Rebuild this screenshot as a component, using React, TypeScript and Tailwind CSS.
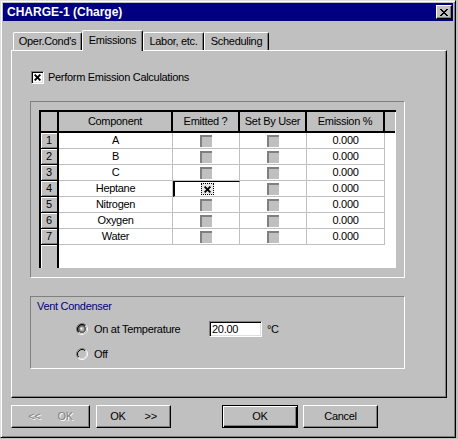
import React from "react";

const components = ["A", "B", "C", "Heptane", "Nitrogen", "Oxygen", "Water"];

const closeGlyph = ["xx....xx", ".xx..xx.", "..xxxx..", "...xx...", "..xxxx..", ".xx..xx.", "xx....xx"];

function CloseGlyph() {
  return (
    <svg width="8" height="7" viewBox="0 0 8 7" shapeRendering="crispEdges">
      {closeGlyph.map((row, y) =>
        row.split("").map((c, x) => (c === "x" ? <rect key={`${x}-${y}`} x={x} y={y} width="1" height="1" fill="#000" /> : null))
      )}
    </svg>
  );
}

function XMark() {
  return (
    <svg width="7" height="7" viewBox="0 0 7 7">
      <path d="M0.6 0.6 L6.4 6.4 M6.4 0.6 L0.6 6.4" stroke="#000" strokeWidth="1.9" fill="none" />
    </svg>
  );
}

function Radio({ checked }: { checked?: boolean }) {
  return (
    <svg width="12" height="12" viewBox="0 0 12 12">
      <circle cx="6" cy="6" r="5.5" fill={checked ? "#606060" : "#c0c0c0"} />
      <path d="M2.11 9.89 A5.5 5.5 0 0 1 9.89 2.11" stroke="#808080" fill="none" />
      <path d="M9.89 2.11 A5.5 5.5 0 0 1 2.11 9.89" stroke="#fff" fill="none" />
      <path d="M2.82 9.18 A4.5 4.5 0 0 1 9.18 2.82" stroke="#000" fill="none" />
      <path d="M9.18 2.82 A4.5 4.5 0 0 1 2.82 9.18" stroke="#dfdfdf" fill="none" />
      {checked && (
        <>
          <circle cx="6" cy="6" r="2.4" fill="#b0b0b0" />
          <circle cx="5.4" cy="5.4" r="1" fill="#fff" />
        </>
      )}
    </svg>
  );
}

function GrayBox() {
  return <div className="h-[12px] w-[12px] border-l-2 border-t-2 border-[#808080] bg-[#c0c0c0]" />;
}

function Tab({ label, width, selected }: { label: string; width: string; selected?: boolean }) {
  if (selected) {
    return (
      <div
        className={`relative z-10 -mb-px flex h-[21px] ${width} items-center justify-center rounded-t-[2px] border-l border-r border-t border-white border-r-black bg-[#c0c0c0] pb-[2px] shadow-[inset_-1px_0_0_#808080]`}
      >
        {label}
      </div>
    );
  }
  return (
    <div
      className={`flex h-[18px] ${width} items-center justify-center rounded-t-[2px] border-l border-r border-t border-white border-r-black shadow-[inset_-1px_0_0_#808080]`}
    >
      {label}
    </div>
  );
}

function Button({ children, width, isDefault }: { children: React.ReactNode; width: string; isDefault?: boolean }) {
  return (
    <div
      className={`flex h-[23px] ${width} items-center justify-center pb-[1px] ${
        isDefault
          ? "border border-black shadow-[inset_1px_1px_0_#fff,inset_-1px_-1px_0_#000,inset_-2px_-2px_0_#808080]"
          : "border border-white border-b-black border-r-black shadow-[inset_-1px_-1px_0_#808080]"
      }`}
    >
      {children}
    </div>
  );
}

export default function App() {
  return (
    <div className="h-[439px] w-[458px] bg-[#c0c0c0] font-['Liberation_Sans',Arial,sans-serif] text-[11px] leading-none tracking-[-0.3px] text-black">
      <div className="flex h-[438px] w-[456px] flex-col border border-[#dfdfdf] border-b-black border-r-black p-[2px] shadow-[inset_1px_1px_0_#fff,inset_-1px_-1px_0_#808080]">
        {/* Title bar */}
        <div className="flex h-[18px] shrink-0 items-center justify-between bg-[#000080] pl-[4px] pr-[1px]">
          <span className="text-[12px] font-bold tracking-normal text-white">CHARGE-1 (Charge)</span>
          <div className="flex h-[14px] w-[16px] items-center justify-center border border-white border-b-black border-r-black bg-[#c0c0c0] shadow-[inset_-1px_-1px_0_#808080]">
            <CloseGlyph />
          </div>
        </div>

        {/* Tabs */}
        <div className="ml-[8px] mt-[9px] flex h-[20px] shrink-0 items-end pl-[2px]">
          <Tab label="Oper.Cond's" width="w-[69px]" />
          <Tab label="Emissions" width="w-[61px]" selected />
          <Tab label="Labor, etc." width="w-[61px]" />
          <Tab label="Scheduling" width="w-[65px]" />
        </div>

        {/* Tab panel */}
        <div className="ml-[8px] flex h-[348px] w-[436px] shrink-0 flex-col border border-white border-b-black border-r-black shadow-[inset_-1px_-1px_0_#808080]">
          <div className="ml-[19px] mt-[20px] flex h-[13px] items-center gap-[4px]">
            <div className="flex h-[13px] w-[13px] items-center justify-center border border-[#808080] border-b-white border-r-white bg-white shadow-[inset_1px_1px_0_#000,inset_-1px_-1px_0_#dfdfdf]">
              <XMark />
            </div>
            <span>Perform Emission Calculations</span>
          </div>

          {/* Grid */}
          <div className="ml-[18px] mt-[17px] h-[177px] w-[375px] border border-[#808080] border-b-white border-r-white pl-[8px] pt-[8px]">
            <div className="flex h-[158px] w-[357px] flex-col border-l-2 border-t-2 border-black bg-white">
              <div className="flex h-[21px] shrink-0">
                <div className="w-[18px] border-b-2 border-r-2 border-black bg-[#c0c0c0]" />
                <div className="flex w-[114px] items-center justify-center border-b-2 border-r-2 border-black bg-[#c0c0c0]">Component</div>
                <div className="flex w-[67px] items-center justify-center border-b-2 border-r-2 border-black bg-[#c0c0c0]">Emitted ?</div>
                <div className="flex w-[67px] items-center justify-center border-b-2 border-r-2 border-black bg-[#c0c0c0]">Set By User</div>
                <div className="flex w-[78px] items-center justify-center border-b-2 border-r-2 border-black bg-[#c0c0c0]">Emission %</div>
                <div className="w-[10px] border-b-2 border-black bg-[#c0c0c0]" />
              </div>
              {components.map((name, i) => (
                <div key={name} className="flex h-[16px] shrink-0">
                  <div className="flex w-[18px] items-center justify-center border-b border-r-2 border-black bg-[#c0c0c0] shadow-[inset_1px_1px_0_#fff,inset_0_-1px_0_#808080]">
                    {i + 1}
                  </div>
                  <div className="flex w-[114px] items-center justify-center border-b border-r border-[#c0c0c0]">{name}</div>
                  {i === 3 ? (
                    <div className="flex w-[67px] items-center justify-center border-b border-l-2 border-r border-t border-[#c0c0c0] border-l-black border-t-black">
                      <div className="flex h-[12px] w-[13px] items-center justify-center border border-dotted border-black bg-[#e8e8e8]">
                        <XMark />
                      </div>
                    </div>
                  ) : (
                    <div className="flex w-[67px] items-center justify-center border-b border-r border-[#c0c0c0]">
                      <GrayBox />
                    </div>
                  )}
                  <div className="flex w-[67px] items-center justify-center border-b border-r border-[#c0c0c0]">
                    <GrayBox />
                  </div>
                  <div className="flex w-[78px] items-center justify-center border-b border-r border-[#c0c0c0]">0.000</div>
                </div>
              ))}
              <div className="flex flex-1">
                <div className="w-[18px] border-r-2 border-black bg-[#c0c0c0] shadow-[inset_1px_1px_0_#fff]" />
              </div>
            </div>
          </div>

          {/* Vent Condenser */}
          <div className="ml-[18px] mt-[18px] flex h-[73px] w-[375px] flex-col border border-[#808080] border-b-white border-r-white pl-[6px] pt-[4px]">
            <span className="text-[#000080]">Vent Condenser</span>
            <div className="ml-[39px] mt-[9px] flex h-[16px] items-center">
              <Radio checked />
              <span className="ml-[6px] w-[115px]">On at Temperature</span>
              <div className="flex h-[16px] w-[53px] items-center border border-[#808080] border-b-white border-r-white bg-white pl-[2px] shadow-[inset_1px_1px_0_#000,inset_-1px_-1px_0_#dfdfdf]">
                20.00
              </div>
              <span className="ml-[5px]">°C</span>
            </div>
            <div className="ml-[39px] mt-[9px] flex h-[16px] items-center">
              <Radio />
              <span className="ml-[6px]">Off</span>
            </div>
          </div>
        </div>

        {/* Buttons */}
        <div className="ml-[8px] mt-[7px] flex h-[23px] shrink-0">
          <Button width="w-[79px]">
            <span className="text-[#808080] [text-shadow:1px_1px_0_#fff]">&lt;&lt;</span>
            <span className="ml-[17px] text-[#808080] [text-shadow:1px_1px_0_#fff]">OK</span>
          </Button>
          <div className="ml-[6px]">
            <Button width="w-[75px]">
              <span>OK</span>
              <span className="ml-[19px]">&gt;&gt;</span>
            </Button>
          </div>
          <div className="ml-[51px]">
            <Button width="w-[76px]" isDefault>
              OK
            </Button>
          </div>
          <div className="ml-[5px]">
            <Button width="w-[75px]">Cancel</Button>
          </div>
        </div>
      </div>
    </div>
  );
}
